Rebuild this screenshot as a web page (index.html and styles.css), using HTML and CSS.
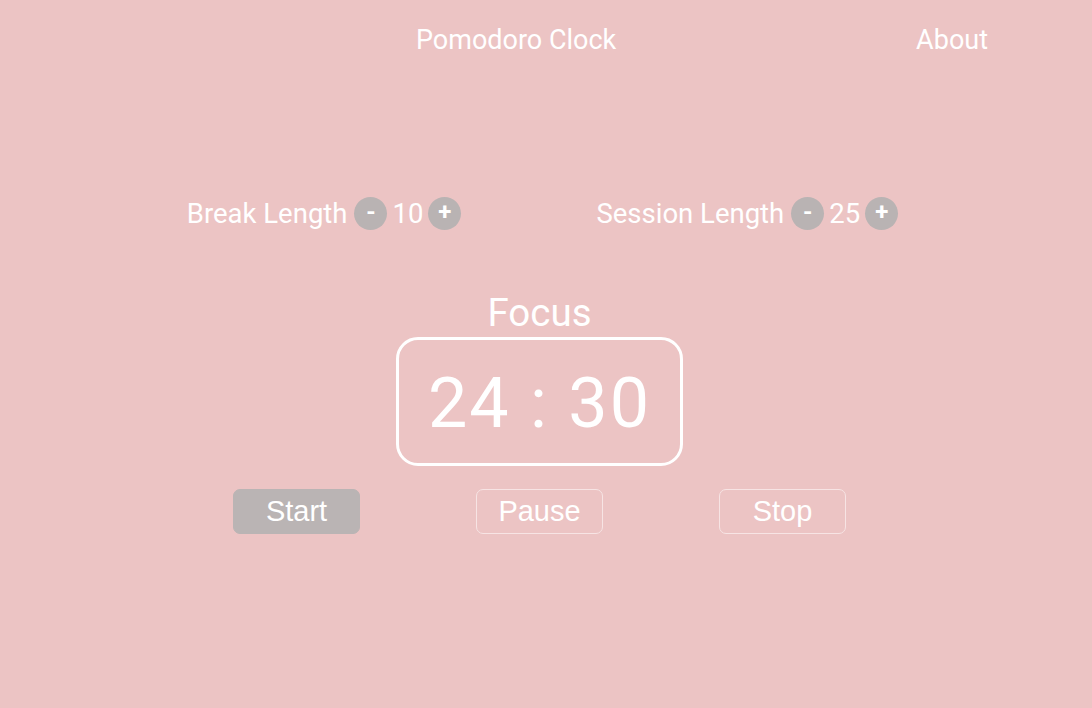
FILE: index.html
```html
<!DOCTYPE html>
<html lang="en">
<head>
<meta charset="utf-8">
<title>Pomodoro Clock</title>
<link rel="stylesheet" href="styles.css">
</head>
<body>
<header class="topbar">
  <span class="brand">Pomodoro Clock</span>
  <a class="nav-link" href="#">About</a>
</header>
<main class="app">
  <section class="settings">
    <div class="setting">
      <span class="setting-label">Break Length</span>
      <button class="round-btn" type="button">-</button>
      <span class="setting-value">10</span>
      <button class="round-btn" type="button">+</button>
    </div>
    <div class="setting">
      <span class="setting-label">Session Length</span>
      <button class="round-btn" type="button">-</button>
      <span class="setting-value">25</span>
      <button class="round-btn" type="button">+</button>
    </div>
  </section>
  <section class="timer">
    <h2 class="timer-label">Focus</h2>
    <div class="timer-box">24 : 30</div>
  </section>
  <section class="controls">
    <button class="ctl ctl-active" type="button">Start</button>
    <button class="ctl" type="button">Pause</button>
    <button class="ctl" type="button">Stop</button>
  </section>
</main>
</body>
</html>
```

FILE: styles.css
```css
html, body {
  margin: 0;
  padding: 0;
}
body {
  background: #ecc4c4;
  color: #ffffff;
  font-family: Roboto, "Liberation Sans", sans-serif;
  width: 1092px;
  height: 708px;
  overflow: hidden;
}
.topbar {
  display: flex;
  align-items: center;
  justify-content: space-between;
  height: 80px;
  padding: 0 104px 0 416px;
}
.brand {
  font-size: 27px;
}
.nav-link {
  color: #ffffff;
  text-decoration: none;
  font-size: 27px;
}
.app {
  display: flex;
  flex-direction: column;
  align-items: center;
  padding-right: 13px;
}
.settings {
  display: flex;
  gap: 135px;
  margin-top: 117px;
  margin-left: 6px;
  align-items: center;
}
.setting {
  display: flex;
  align-items: center;
  gap: 5px;
  font-size: 27.5px;
}
.setting-label {
  margin-right: 2px;
}
.round-btn {
  width: 33px;
  height: 33px;
  border-radius: 50%;
  border: none;
  background: #b9b3b3;
  color: #ffffff;
  font-family: Roboto, sans-serif;
  font-size: 24px;
  font-weight: 700;
  line-height: 1;
  padding: 0 0 3px;
  display: flex;
  align-items: center;
  justify-content: center;
}
.timer {
  display: flex;
  flex-direction: column;
  align-items: center;
  margin-top: 62px;
}
.timer-label {
  margin: 0;
  font-weight: 400;
  font-size: 38.5px;
  line-height: 42px;
}
.timer-box {
  margin-top: 3px;
  width: 281px;
  height: 121px;
  border: 3px solid #ffffff;
  border-radius: 22px;
  display: flex;
  align-items: center;
  justify-content: center;
  font-size: 70px;
  letter-spacing: 2px;
  padding-top: 2px;
  box-sizing: content-box;
}
.controls {
  display: flex;
  gap: 116px;
  margin-top: 23px;
}
.ctl {
  width: 127px;
  height: 45px;
  border: 1px solid #f7e4e4;
  border-radius: 7px;
  background: transparent;
  color: #ffffff;
  font-family: "Liberation Sans", Arial, sans-serif;
  font-size: 29px;
  padding: 0;
}
.ctl-active {
  background: #bab4b4;
  border-color: #bab4b4;
}
```
